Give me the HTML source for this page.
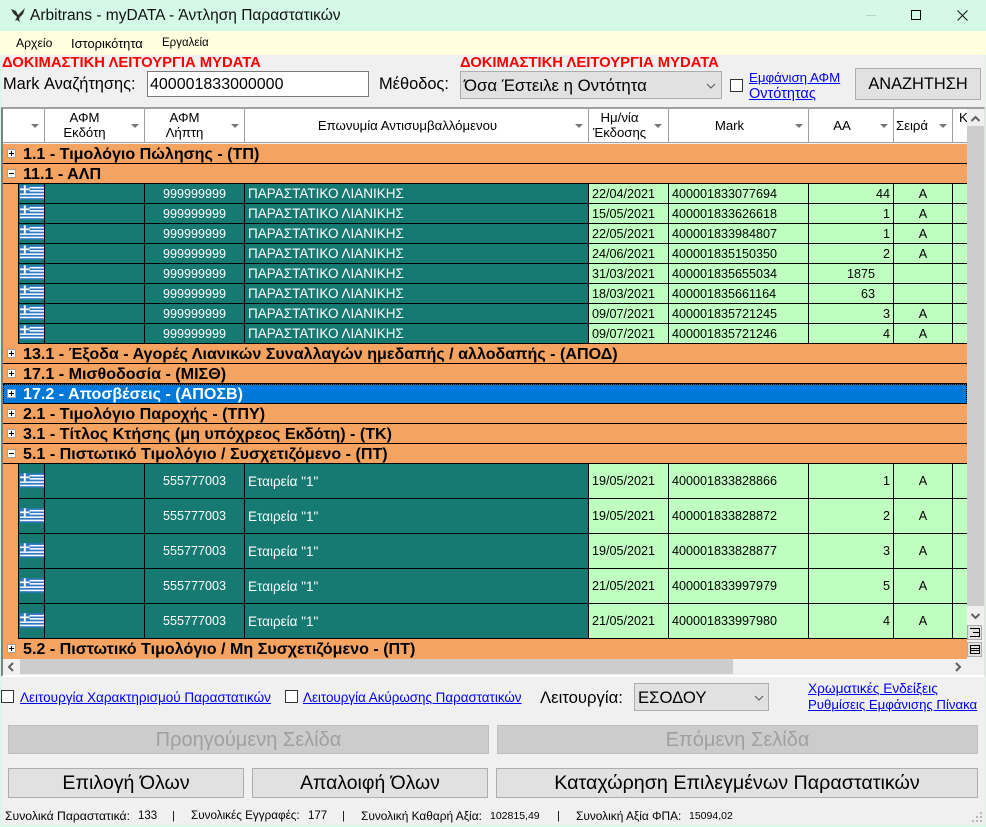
<!DOCTYPE html>
<html lang="el"><head><meta charset="utf-8"><title>Arbitrans - myDATA</title>
<style>
html,body{margin:0;padding:0}
body{width:986px;height:827px;position:relative;overflow:hidden;background:#f0f0f0;font-family:"Liberation Sans",sans-serif;color:#000}
.a{position:absolute;white-space:nowrap}
.lnk{position:absolute;white-space:nowrap;color:#0000ff;text-decoration:underline;font-size:13px}
.btn{position:absolute;box-sizing:border-box;background:#e1e1e1;border:1px solid #adadad;text-align:center;font-size:20px;white-space:nowrap}
.dis{background:#cccccc;border-color:#bfbfbf;color:#a0a0a0}
.cb{position:absolute;box-sizing:border-box;width:13px;height:13px;background:#fff;border:1px solid #333}
.sel{position:absolute;box-sizing:border-box;background:#e1e1e1;border:1px solid #adadad;white-space:nowrap}
.sel svg{position:absolute}
.red{position:absolute;color:#ff0000;font-weight:bold;font-size:14.8px;white-space:nowrap}
.hd{position:absolute;top:109px;height:34px;box-sizing:border-box;background:#fff;border-right:1px solid #a0a0a0;border-bottom:1px solid #a0a0a0;font-size:13.2px;line-height:15px;text-align:center;white-space:nowrap;overflow:hidden}
.hd span{display:block}
.tri{position:absolute;width:0;height:0;border-left:4px solid transparent;border-right:4px solid transparent;border-top:4px solid #777;top:124px}
.g{position:absolute;left:3px;width:964px;height:20px;box-sizing:border-box;background:#f4a460;border-bottom:1px solid #000;font-weight:bold;font-size:16.1px;line-height:19px;white-space:nowrap;overflow:hidden}
.g b{position:absolute;left:20px;top:1px;font-weight:bold}
.sq{position:absolute;left:4px;top:5px;width:9px;height:9px;box-sizing:border-box;background:#fff;border:1px solid #a0a0a0}
.sq:before{content:"";position:absolute;left:1px;top:3px;width:5px;height:1px;background:#000}
.sq.p:after{content:"";position:absolute;left:3px;top:1px;width:1px;height:5px;background:#000}
.s{background:#0078d7;color:#fff;outline:1px dotted #000;outline-offset:-1px}
.r{position:absolute;left:3px;width:964px;background:#f4a460;font-size:12.6px}
.r i{position:absolute;top:0;bottom:0;box-sizing:border-box;border-right:1px solid #000;border-bottom:1px solid #000;font-style:normal;white-space:nowrap;overflow:hidden;display:flex;align-items:center}
.r svg{position:absolute;left:1px;top:1px}
.c1{left:15px;width:27px;background:#177a72;border-left:1px solid #000}
.c2{left:42px;width:100px;background:#177a72}
.c3{left:142px;width:100px;background:#177a72;color:#fff;justify-content:center}
.c4{left:242px;width:344px;background:#177a72;color:#fff;padding-left:3px;font-size:13.5px}
.c5{left:586px;width:80px;background:#bfffbf;padding-left:3px}
.c6{left:666px;width:140px;background:#bfffbf;padding-left:3px}
.c7{left:806px;width:85px;background:#bfffbf;justify-content:flex-end;padding-right:3px}
.c8{left:891px;width:59px;background:#bfffbf;justify-content:center}
.c9{left:950px;width:14px;background:#bfffbf;border-right:0!important}
</style></head><body>
<svg width="0" height="0" style="position:absolute"><defs>
<symbol id="fl" viewBox="0 0 26 15"><rect width="26" height="15" fill="#2f78c4"/><g fill="#fff"><rect y="1.7" width="26" height="1.6"/><rect y="5" width="26" height="1.6"/><rect y="8.4" width="26" height="1.6"/><rect y="11.8" width="26" height="1.6"/></g><rect width="10" height="8.4" fill="#2f78c4"/><rect x="4" width="2" height="8.4" fill="#fff"/><rect y="3.3" width="10" height="1.8" fill="#fff"/></symbol>
</defs></svg>

<!-- title -->
<div class="a" style="left:0;top:0;width:986px;height:31px;background:#d4f9e7"></div>
<svg class="a" style="left:10px;top:7px" width="17" height="16" viewBox="0 0 17 16"><path d="M1 2 L6 4 L8 8 L11 5 L15 1 L13 7 L10 10 L9 12 L10 15 L7 13 L5 14 L7 10 L5 8 L3 6 Z" fill="#33322e"/></svg>
<div class="a" style="left:30px;top:7px;font-size:15.5px;line-height:18px;color:#111">Arbitrans - myDATA - Άντληση Παραστατικών</div>
<div class="a" style="left:866px;top:15px;width:10px;height:1px;background:#b5d5c5"></div>
<div class="a" style="left:911px;top:10px;width:10px;height:10px;box-sizing:border-box;border:1px solid #000"></div>
<svg class="a" style="left:957px;top:10px" width="11" height="11"><path d="M.5 .5L10.500 10.500M10.500 .5L.5 10.500" stroke="#111" fill="none"/></svg>

<!-- menu -->
<div class="a" style="left:0;top:31px;width:986px;height:24px;background:#ffffe0"></div>
<div class="a" style="left:16px;top:36px;font-size:12.200px;line-height:15px">Αρχείο</div>
<div class="a" style="left:71px;top:36px;font-size:12.900px;line-height:15px">Ιστορικότητα</div>
<div class="a" style="left:162px;top:36px;font-size:11.500px;line-height:15px">Εργαλεία</div>

<!-- top form -->
<div class="red" style="left:2px;top:55px;line-height:16px">ΔΟΚΙΜΑΣΤΙΚΗ ΛΕΙΤΟΥΡΓΙΑ MYDATA</div>
<div class="red" style="left:460px;top:55px;line-height:16px">ΔΟΚΙΜΑΣΤΙΚΗ ΛΕΙΤΟΥΡΓΙΑ MYDATA</div>
<div class="a" style="left:3px;top:75px;font-size:16.400px;line-height:19px">Mark Αναζήτησης:</div>
<div class="a" style="left:147px;top:71px;width:222px;height:26px;box-sizing:border-box;background:#fff;border:1px solid #7a7a7a;font-size:16px;line-height:25px;padding-left:2px">400001833000000</div>
<div class="a" style="left:379px;top:75px;font-size:16.400px;line-height:19px">Μέθοδος:</div>
<div class="sel" style="left:460px;top:71px;width:262px;height:28px;font-size:16.800px;line-height:28px;padding-left:3px">Όσα Έστειλε η Οντότητα<svg style="left:245px;top:11px" width="10" height="6"><path d="M1 1L5 5L9 1" stroke="#555" fill="none"/></svg></div>
<div class="cb" style="left:730px;top:79px"></div>
<div class="lnk" style="left:749px;top:69px;line-height:17px;font-size:13.300px">Εμφάνιση ΑΦΜ</div>
<div class="lnk" style="left:749px;top:86px;line-height:17px;font-size:14.500px">Οντότητας</div>
<div class="btn" style="left:855px;top:68px;width:126px;height:32px;font-size:16.400px;line-height:30px">ΑΝΑΖΗΤΗΣΗ</div>

<!-- grid frame -->
<div class="a" style="left:1px;top:107px;width:984px;height:570px;box-sizing:border-box;background:#f0f0f0;border:1px solid #ddd;border-bottom:2px solid #fff;border-top:2px solid #a0a0a0;border-left:2px solid #808080"></div>

<!-- header -->
<div class="hd" style="left:3px;width:42px"></div>
<div class="hd" style="left:45px;width:100px;padding:1px 20px 0 0"><span>ΑΦΜ</span><span>Εκδότη</span></div>
<div class="hd" style="left:145px;width:100px;padding:1px 20px 0 0"><span>ΑΦΜ</span><span>Λήπτη</span></div>
<div class="hd" style="left:245px;width:344px;padding:9px 18px 0 0"><span>Επωνυμία Αντισυμβαλλόμενου</span></div>
<div class="hd" style="left:589px;width:80px;padding:1px 18px 0 0"><span>Ημ/νία</span><span>Έκδοσης</span></div>
<div class="hd" style="left:669px;width:140px;padding:9px 18px 0 0"><span>Mark</span></div>
<div class="hd" style="left:809px;width:85px;padding:9px 18px 0 0"><span>AA</span></div>
<div class="hd" style="left:894px;width:59px;padding:9px 22px 0 0"><span>Σειρά</span></div>
<div class="hd" style="left:953px;width:14px;border-right:0;text-align:left;padding:1px 0 0 6px"><span>Κ</span></div>
<div class="tri" style="left:31px"></div><div class="tri" style="left:131px"></div><div class="tri" style="left:231px"></div><div class="tri" style="left:575px"></div><div class="tri" style="left:654px"></div><div class="tri" style="left:795px"></div><div class="tri" style="left:880px"></div><div class="tri" style="left:939px"></div>

<!-- rows -->
<div class="g" style="top:144px"><span class="sq p"></span><b>1.1 - Τιμολόγιο Πώλησης - (ΤΠ)</b></div>
<div class="g" style="top:164px"><span class="sq"></span><b>11.1 - ΑΛΠ</b></div>

<div class="r" style="top:184px;height:20px"><i class="c1"><svg width="25" height="15"><use href="#fl"/></svg></i><i class="c2"></i><i class="c3">999999999</i><i class="c4">ΠΑΡΑΣΤΑΤΙΚΟ ΛΙΑΝΙΚΗΣ</i><i class="c5">22/04/2021</i><i class="c6">400001833077694</i><i class="c7">44</i><i class="c8">A</i><i class="c9"></i></div>
<div class="r" style="top:204px;height:20px"><i class="c1"><svg width="25" height="15"><use href="#fl"/></svg></i><i class="c2"></i><i class="c3">999999999</i><i class="c4">ΠΑΡΑΣΤΑΤΙΚΟ ΛΙΑΝΙΚΗΣ</i><i class="c5">15/05/2021</i><i class="c6">400001833626618</i><i class="c7">1</i><i class="c8">A</i><i class="c9"></i></div>
<div class="r" style="top:224px;height:20px"><i class="c1"><svg width="25" height="15"><use href="#fl"/></svg></i><i class="c2"></i><i class="c3">999999999</i><i class="c4">ΠΑΡΑΣΤΑΤΙΚΟ ΛΙΑΝΙΚΗΣ</i><i class="c5">22/05/2021</i><i class="c6">400001833984807</i><i class="c7">1</i><i class="c8">A</i><i class="c9"></i></div>
<div class="r" style="top:244px;height:20px"><i class="c1"><svg width="25" height="15"><use href="#fl"/></svg></i><i class="c2"></i><i class="c3">999999999</i><i class="c4">ΠΑΡΑΣΤΑΤΙΚΟ ΛΙΑΝΙΚΗΣ</i><i class="c5">24/06/2021</i><i class="c6">400001835150350</i><i class="c7">2</i><i class="c8">A</i><i class="c9"></i></div>
<div class="r" style="top:264px;height:20px"><i class="c1"><svg width="25" height="15"><use href="#fl"/></svg></i><i class="c2"></i><i class="c3">999999999</i><i class="c4">ΠΑΡΑΣΤΑΤΙΚΟ ΛΙΑΝΙΚΗΣ</i><i class="c5">31/03/2021</i><i class="c6">400001835655034</i><i class="c7" style="padding-right:18px">1875</i><i class="c8"></i><i class="c9"></i></div>
<div class="r" style="top:284px;height:20px"><i class="c1"><svg width="25" height="15"><use href="#fl"/></svg></i><i class="c2"></i><i class="c3">999999999</i><i class="c4">ΠΑΡΑΣΤΑΤΙΚΟ ΛΙΑΝΙΚΗΣ</i><i class="c5">18/03/2021</i><i class="c6">400001835661164</i><i class="c7" style="padding-right:18px">63</i><i class="c8"></i><i class="c9"></i></div>
<div class="r" style="top:304px;height:20px"><i class="c1"><svg width="25" height="15"><use href="#fl"/></svg></i><i class="c2"></i><i class="c3">999999999</i><i class="c4">ΠΑΡΑΣΤΑΤΙΚΟ ΛΙΑΝΙΚΗΣ</i><i class="c5">09/07/2021</i><i class="c6">400001835721245</i><i class="c7">3</i><i class="c8">A</i><i class="c9"></i></div>
<div class="r" style="top:324px;height:20px"><i class="c1"><svg width="25" height="15"><use href="#fl"/></svg></i><i class="c2"></i><i class="c3">999999999</i><i class="c4">ΠΑΡΑΣΤΑΤΙΚΟ ΛΙΑΝΙΚΗΣ</i><i class="c5">09/07/2021</i><i class="c6">400001835721246</i><i class="c7">4</i><i class="c8">A</i><i class="c9"></i></div>

<div class="g" style="top:344px"><span class="sq p"></span><b>13.1 - Έξοδα - Αγορές Λιανικών Συναλλαγών ημεδαπής / αλλοδαπής - (ΑΠΟΔ)</b></div>
<div class="g" style="top:364px"><span class="sq p"></span><b>17.1 - Μισθοδοσία - (ΜΙΣΘ)</b></div>
<div class="g s" style="top:384px"><span class="sq p"></span><b>17.2 - Αποσβέσεις - (ΑΠΟΣΒ)</b></div>
<div class="g" style="top:404px"><span class="sq p"></span><b>2.1 - Τιμολόγιο Παροχής - (ΤΠΥ)</b></div>
<div class="g" style="top:424px"><span class="sq p"></span><b>3.1 - Τίτλος Κτήσης (μη υπόχρεος Εκδότη) - (ΤΚ)</b></div>
<div class="g" style="top:444px"><span class="sq"></span><b>5.1 - Πιστωτικό Τιμολόγιο / Συσχετιζόμενο - (ΠΤ)</b></div>

<div class="r" style="top:464px;height:35px"><i class="c1"><svg width="25" height="15" style="top:9px"><use href="#fl"/></svg></i><i class="c2"></i><i class="c3">555777003</i><i class="c4">Εταιρεία "1"</i><i class="c5">19/05/2021</i><i class="c6">400001833828866</i><i class="c7">1</i><i class="c8">A</i><i class="c9"></i></div>
<div class="r" style="top:499px;height:35px"><i class="c1"><svg width="25" height="15" style="top:9px"><use href="#fl"/></svg></i><i class="c2"></i><i class="c3">555777003</i><i class="c4">Εταιρεία "1"</i><i class="c5">19/05/2021</i><i class="c6">400001833828872</i><i class="c7">2</i><i class="c8">A</i><i class="c9"></i></div>
<div class="r" style="top:534px;height:35px"><i class="c1"><svg width="25" height="15" style="top:9px"><use href="#fl"/></svg></i><i class="c2"></i><i class="c3">555777003</i><i class="c4">Εταιρεία "1"</i><i class="c5">19/05/2021</i><i class="c6">400001833828877</i><i class="c7">3</i><i class="c8">A</i><i class="c9"></i></div>
<div class="r" style="top:569px;height:35px"><i class="c1"><svg width="25" height="15" style="top:9px"><use href="#fl"/></svg></i><i class="c2"></i><i class="c3">555777003</i><i class="c4">Εταιρεία "1"</i><i class="c5">21/05/2021</i><i class="c6">400001833997979</i><i class="c7">5</i><i class="c8">A</i><i class="c9"></i></div>
<div class="r" style="top:604px;height:35px"><i class="c1"><svg width="25" height="15" style="top:9px"><use href="#fl"/></svg></i><i class="c2"></i><i class="c3">555777003</i><i class="c4">Εταιρεία "1"</i><i class="c5">21/05/2021</i><i class="c6">400001833997980</i><i class="c7">4</i><i class="c8">A</i><i class="c9"></i></div>

<div class="g" style="top:639px;border-bottom:0"><span class="sq p"></span><b>5.2 - Πιστωτικό Τιμολόγιο / Μη Συσχετιζόμενο - (ΠΤ)</b></div>

<!-- v scrollbar -->
<div class="a" style="left:967px;top:109px;width:17px;height:550px;background:#f0f0f0"></div>
<div class="a" style="left:967px;top:126px;width:17px;height:480px;background:#cdcdcd"></div>
<svg class="a" style="left:970px;top:115px" width="11" height="8"><path d="M1.500 6L5.500 2L9.500 6" stroke="#606060" stroke-width="2" fill="none"/></svg>
<svg class="a" style="left:970px;top:612px" width="11" height="8"><path d="M1.500 2L5.500 6L9.500 2" stroke="#606060" stroke-width="2" fill="none"/></svg>
<div class="a" style="left:967px;top:625px;width:15px;height:15px;box-sizing:border-box;background:#e1e1e1;border:1px solid #adadad"></div>
<svg class="a" style="left:970px;top:628px" width="10" height="9"><path d="M0 .5H9.500V8.500H0M3 4.500H9" stroke="#000" fill="none"/></svg>
<div class="a" style="left:967px;top:642px;width:15px;height:15px;box-sizing:border-box;background:#e1e1e1;border:1px solid #adadad"></div>
<svg class="a" style="left:970px;top:645px" width="10" height="9"><path d="M.5 .5H9.500V8.500H.5ZM0 3.500H10M0 5.500H10" stroke="#000" fill="none"/></svg>

<!-- h scrollbar -->
<div class="a" style="left:3px;top:659px;width:981px;height:16px;background:#f0f0f0"></div>
<div class="a" style="left:20px;top:659px;width:713px;height:15px;background:#cdcdcd"></div>
<svg class="a" style="left:7px;top:662px" width="8" height="10"><path d="M6 1L2 5L6 9" stroke="#606060" stroke-width="2" fill="none"/></svg>
<svg class="a" style="left:954px;top:662px" width="8" height="10"><path d="M2 1L6 5L2 9" stroke="#606060" stroke-width="2" fill="none"/></svg>

<!-- lower -->
<div class="cb" style="left:1px;top:690px"></div>
<div class="lnk" style="left:20px;top:690px;line-height:15px;font-size:13.500px">Λειτουργία Χαρακτηρισμού Παραστατικών</div>
<div class="cb" style="left:285px;top:690px"></div>
<div class="lnk" style="left:303px;top:690px;line-height:15px;font-size:13.400px">Λειτουργία Ακύρωσης Παραστατικών</div>
<div class="a" style="left:540px;top:688px;font-size:16.700px;line-height:19px">Λειτουργία:</div>
<div class="sel" style="left:634px;top:683px;width:135px;height:28px;font-size:16.700px;line-height:27px;padding-left:3px">ΕΣΟΔΟΥ<svg style="left:119px;top:11px" width="10" height="6"><path d="M1 1L5 5L9 1" stroke="#555" fill="none"/></svg></div>
<div class="lnk" style="left:808px;top:681px;line-height:16px;font-size:13.700px">Χρωματικές Ενδείξεις</div>
<div class="lnk" style="left:808px;top:697px;line-height:16px;font-size:13.200px">Ρυθμίσεις Εμφάνισης Πίνακα</div>

<div class="btn dis" style="left:8px;top:725px;width:481px;height:29px;line-height:28px">Προηγούμενη Σελίδα</div>
<div class="btn dis" style="left:497px;top:725px;width:481px;height:29px;line-height:28px">Επόμενη Σελίδα</div>
<div class="btn" style="left:8px;top:768px;width:236px;height:30px;font-size:19.600px;line-height:29px">Επιλογή Όλων</div>
<div class="btn" style="left:252px;top:768px;width:236px;height:30px;font-size:19.400px;line-height:29px">Απαλοιφή Όλων</div>
<div class="btn" style="left:496px;top:768px;width:482px;height:30px;font-size:19.700px;line-height:29px">Καταχώρηση Επιλεγμένων Παραστατικών</div>

<!-- status -->
<div class="a" style="left:5px;top:809px;font-size:12.200px;line-height:14px">Συνολικά Παραστατικά:</div>
<div class="a" style="left:138px;top:809px;font-size:11.500px;line-height:14px">133</div>
<div class="a" style="left:172px;top:809px;font-size:11px;line-height:14px">|</div>
<div class="a" style="left:191px;top:809px;font-size:11.700px;line-height:14px">Συνολικές Εγγραφές:</div>
<div class="a" style="left:308px;top:809px;font-size:11.500px;line-height:14px">177</div>
<div class="a" style="left:342px;top:809px;font-size:11px;line-height:14px">|</div>
<div class="a" style="left:361px;top:809px;font-size:11.900px;line-height:14px">Συνολική Καθαρή Αξία:</div>
<div class="a" style="left:490px;top:809px;font-size:10.500px;line-height:14px">102815,49</div>
<div class="a" style="left:557px;top:809px;font-size:11px;line-height:14px">|</div>
<div class="a" style="left:576px;top:809px;font-size:11.900px;line-height:14px">Συνολική Αξία ΦΠΑ:</div>
<div class="a" style="left:689px;top:809px;font-size:10.500px;line-height:14px">15094,02</div>
<svg class="a" style="left:971px;top:811px" width="12" height="12"><g fill="#b8b8b8"><rect x="9" y="1" width="2" height="2"/><rect x="5" y="5" width="2" height="2"/><rect x="9" y="5" width="2" height="2"/><rect x="1" y="9" width="2" height="2"/><rect x="5" y="9" width="2" height="2"/><rect x="9" y="9" width="2" height="2"/></g></svg>
<div class="a" style="left:0;top:825px;width:986px;height:2px;background:#d4f9e7"></div>
<div class="a" style="left:0;top:55px;width:1px;height:772px;background:#d4f9e7"></div>
<div class="a" style="left:985px;top:55px;width:1px;height:772px;background:#d4f9e7"></div>
</body></html>
